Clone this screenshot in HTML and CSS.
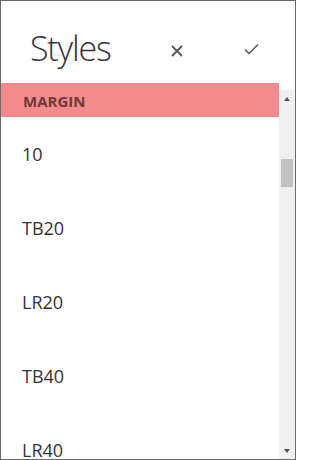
FILE: index.html
```html
<!DOCTYPE html>
<html>
<head>
<meta charset="utf-8">
<link rel="stylesheet" href="styles.css">
</head>
<body>
<div class="panel">
  <header class="header">
    <h1 class="title">Styles</h1>
    <button class="icon-btn close" aria-label="Cancel">
      <svg width="12" height="12" viewBox="0 0 12 12"><path d="M1 1L11 11M11 1L1 11" stroke="#555" stroke-width="1.8" fill="none"/></svg>
    </button>
    <button class="icon-btn ok" aria-label="OK">
      <svg width="15" height="12" viewBox="0 0 15 12"><path d="M1 6.5L5 10.5L14 1.5" stroke="#555" stroke-width="1.5" fill="none"/></svg>
    </button>
  </header>
  <div class="body">
    <div class="list">
      <div class="group">MARGIN</div>
      <div class="item">10</div>
      <div class="item">TB20</div>
      <div class="item">LR20</div>
      <div class="item">TB40</div>
      <div class="item">LR40</div>
    </div>
    <div class="scrollbar">
      <div class="arrow up"></div>
      <div class="track"><div class="thumb"></div></div>
      <div class="arrow down"></div>
    </div>
  </div>
</div>
</body>
</html>
```
FILE: styles.css
```css
html, body {
  margin: 0;
  padding: 0;
  background: #fff;
}
.panel {
  width: 296px;
  height: 460px;
  box-sizing: border-box;
  border: 1px solid #6a6a6a;
  display: flex;
  flex-direction: column;
  font-family: "Open Sans", sans-serif;
  color: #333;
  overflow: hidden;
}
.header {
  height: 82px;
  box-sizing: border-box;
  padding-top: 16px;
  flex: none;
  display: flex;
  align-items: center;
  padding-left: 29px;
}
.title {
  margin: 0;
  font-size: 34px;
  font-weight: 300;
  letter-spacing: -1.2px;
  width: 141px;
  line-height: 40px;
  margin-top: -4px;
}
.icon-btn {
  border: 0;
  background: none;
  padding: 0;
  display: flex;
}
.close {
  margin-top: 1px;
}
.ok {
  margin-left: 61px;
  margin-top: -3px;
}
.body {
  flex: 1;
  display: flex;
  min-height: 0;
}
.list {
  flex: 1;
  overflow: hidden;
}
.group {
  background: #f28b8b;
  height: 32px;
  padding-top: 2px;
  line-height: 32px;
  padding-left: 22px;
  font-size: 15px;
  font-weight: 700;
  color: #6f3838;
}
.item {
  padding: 25px 21px;
  line-height: 24px;
  font-size: 18px;
  color: #333;
}
.item:last-child {
  padding-bottom: 0;
  line-height: 20px;
  padding-top: 27px;
}
.scrollbar {
  width: 16px;
  margin-top: 7px;
  background: #f0f0f0;
  display: flex;
  flex-direction: column;
}
.arrow {
  height: 17px;
  flex: none;
  display: flex;
  align-items: center;
  justify-content: center;
}
.arrow::before {
  content: "";
  border-left: 3.5px solid transparent;
  border-right: 3.5px solid transparent;
}
.up::before {
  border-bottom: 4px solid #505050;
}
.down::before {
  border-top: 4px solid #505050;
}
.track {
  flex: 1;
  padding-top: 52px;
}
.thumb {
  margin: 0 2px 0 2px;
  height: 28px;
  background: #c1c1c1;
}
```
